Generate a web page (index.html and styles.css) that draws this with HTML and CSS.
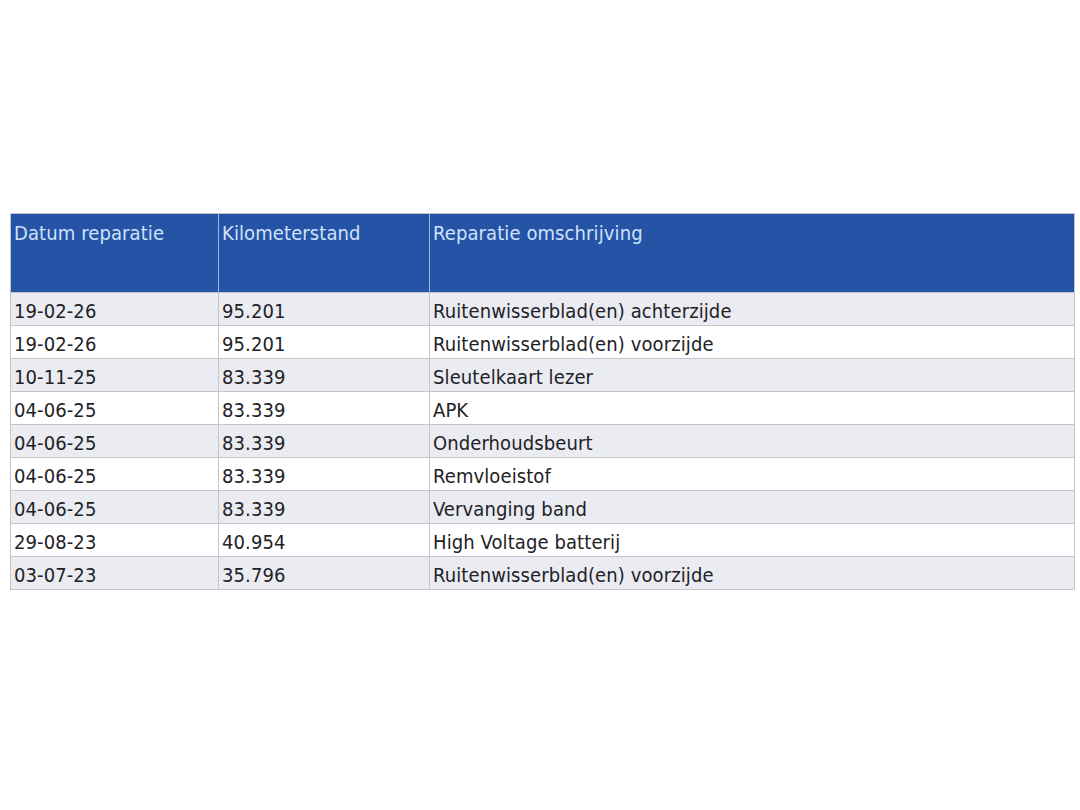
FILE: index.html
```
<!DOCTYPE html>
<html lang="nl">
<head>
<meta charset="utf-8">
<title>Reparaties</title>
<link rel="stylesheet" href="styles.css">
</head>
<body>
<div class="page">
<table class="repairs">
<colgroup><col class="c1"><col class="c2"><col class="c3"></colgroup>
<thead>
<tr><th>Datum reparatie</th><th>Kilometerstand</th><th>Reparatie omschrijving</th></tr>
</thead>
<tbody>
<tr><td>19-02-26</td><td>95.201</td><td>Ruitenwisserblad(en) achterzijde</td></tr>
<tr><td>19-02-26</td><td>95.201</td><td>Ruitenwisserblad(en) voorzijde</td></tr>
<tr><td>10-11-25</td><td>83.339</td><td>Sleutelkaart lezer</td></tr>
<tr><td>04-06-25</td><td>83.339</td><td>APK</td></tr>
<tr><td>04-06-25</td><td>83.339</td><td>Onderhoudsbeurt</td></tr>
<tr><td>04-06-25</td><td>83.339</td><td>Remvloeistof</td></tr>
<tr><td>04-06-25</td><td>83.339</td><td>Vervanging band</td></tr>
<tr><td>29-08-23</td><td>40.954</td><td>High Voltage batterij</td></tr>
<tr><td>03-07-23</td><td>35.796</td><td>Ruitenwisserblad(en) voorzijde</td></tr>
</tbody>
</table>
</div>
</body>
</html>
```
FILE: styles.css
```
html, body {
  margin: 0;
  padding: 0;
  background: #ffffff;
}
.page {
  width: 1080px;
  height: 810px;
  padding: 213px 0 0 10px;
  box-sizing: border-box;
}
.repairs {
  border-collapse: collapse;
  width: 1064px;
  table-layout: fixed;
  font-family: "DejaVu Sans Condensed", "DejaVu Sans", sans-serif;
  font-size: 20px;
  line-height: 24px;
  color: #222226;
  border: 1px solid #c4c4cc;
}
.c1 { width: 208px; }
.c2 { width: 211px; }
.c3 { width: 645px; }
.repairs th {
  background: #2553a6;
  color: #cfe2fb;
  font-weight: normal;
  text-align: left;
  vertical-align: top;
  height: 79px;
  box-sizing: border-box;
  padding: 7px 3px 0 3px;
  border-left: 1px solid #9fb6e0;
  letter-spacing: 0.1px;
}
.repairs th:first-child { border-left: none; }
.repairs td {
  height: 33px;
  box-sizing: border-box;
  padding: 3px 4px 0 3px;
  border: 1px solid #c4c4cc;
  white-space: nowrap;
  vertical-align: middle;
  letter-spacing: 0.1px;
}
.repairs tbody tr:nth-child(odd) td { background: #ebebf2; }
.repairs tbody tr:nth-child(even) td { background: #ffffff; }
```
